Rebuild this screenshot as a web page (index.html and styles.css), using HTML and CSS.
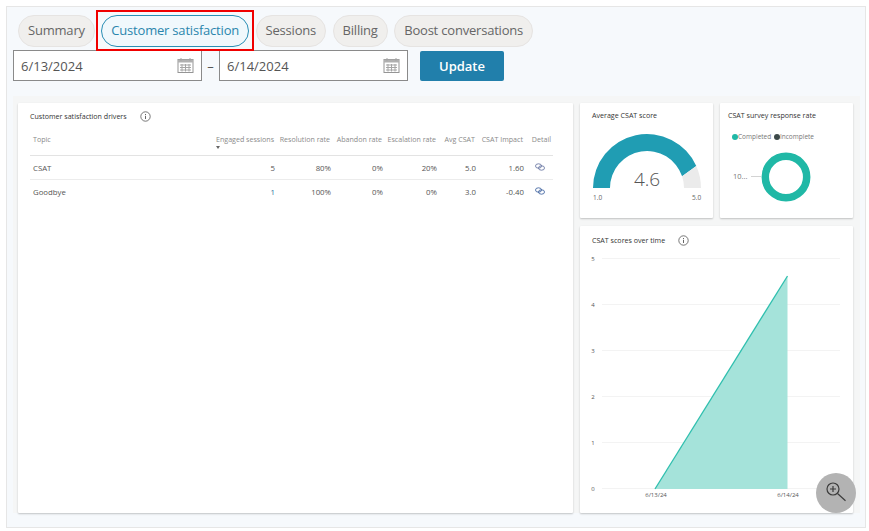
FILE: index.html
```html
<!DOCTYPE html>
<html lang="en">
<head>
    <meta charset="UTF-8">
    <meta name="viewport" content="width=device-width, initial-scale=1.0">
    <title>Customer satisfaction</title>
    <link rel="stylesheet" href="styles.css">
</head>
<body>
    <div class="frame">
        <nav class="tabs">
            <a class="tab" href="#">Summary</a>
            <span class="highlight"><a class="tab tab-active" href="#">Customer satisfaction</a></span>
            <a class="tab" href="#">Sessions</a>
            <a class="tab" href="#">Billing</a>
            <a class="tab" href="#">Boost conversations</a>
        </nav>

        <div class="filters">
            <div class="date-input">
                <span>6/13/2024</span>
                <svg class="calendar" width="17" height="17" viewBox="0 0 17 17">
                    <rect x="1" y="2.5" width="15" height="13" fill="none" stroke="#959595"/>
                    <rect x="1" y="2.5" width="15" height="3" fill="#b0b0b0"/>
                    <path d="M4 1v3M13 1v3M3 8h11M3 10.5h11M3 13h11M5 7v7.5M8.5 7v7.5M12 7v7.5" stroke="#a5a5a5" stroke-width="1" fill="none"/>
                </svg>
            </div>
            <span class="dash">–</span>
            <div class="date-input">
                <span>6/14/2024</span>
                <svg class="calendar" width="17" height="17" viewBox="0 0 17 17">
                    <rect x="1" y="2.5" width="15" height="13" fill="none" stroke="#959595"/>
                    <rect x="1" y="2.5" width="15" height="3" fill="#b0b0b0"/>
                    <path d="M4 1v3M13 1v3M3 8h11M3 10.5h11M3 13h11M5 7v7.5M8.5 7v7.5M12 7v7.5" stroke="#a5a5a5" stroke-width="1" fill="none"/>
                </svg>
            </div>
            <button class="update">Update</button>
        </div>

        <main class="dashboard">
            <section class="card card-drivers">
                <h2 class="card-title">Customer satisfaction drivers
                    <svg class="info" width="11" height="11" viewBox="0 0 11 11">
                        <circle cx="5.5" cy="5.5" r="4.7" fill="none" stroke="#555" stroke-width="0.8"/>
                        <path d="M5.5 4.8v3.2M5.5 3v1" stroke="#555" stroke-width="0.9"/>
                    </svg>
                </h2>
                <table class="drivers">
                    <tr>
                        <th class="col-topic">Topic</th>
                        <th class="col-sessions">Engaged sessions<span class="sort"></span></th>
                        <th class="col-res">Resolution rate</th>
                        <th class="col-aband">Abandon rate</th>
                        <th class="col-esc">Escalation rate</th>
                        <th class="col-avg">Avg CSAT</th>
                        <th class="col-impact">CSAT Impact</th>
                        <th class="col-detail">Detail</th>
                    </tr>
                    <tr>
                        <td>CSAT</td>
                        <td>5</td>
                        <td>80%</td>
                        <td>0%</td>
                        <td>20%</td>
                        <td>5.0</td>
                        <td>1.60</td>
                        <td class="detail">
                            <svg width="10" height="8" viewBox="0 0 10 8"><ellipse cx="3.5" cy="3" rx="3" ry="2.2" fill="none" stroke="#5a6a9a" stroke-width="0.8"/><ellipse cx="6.5" cy="5" rx="3" ry="2.2" fill="none" stroke="#5a6a9a" stroke-width="0.8"/></svg>
                        </td>
                    </tr>
                    <tr class="last">
                        <td>Goodbye</td>
                        <td class="blue">1</td>
                        <td>100%</td>
                        <td>0%</td>
                        <td>0%</td>
                        <td>3.0</td>
                        <td>-0.40</td>
                        <td class="detail">
                            <svg width="10" height="8" viewBox="0 0 10 8"><ellipse cx="3.5" cy="3" rx="3" ry="2.2" fill="none" stroke="#2f5597" stroke-width="0.8"/><ellipse cx="6.5" cy="5" rx="3" ry="2.2" fill="none" stroke="#2f5597" stroke-width="0.8"/></svg>
                        </td>
                    </tr>
                </table>
            </section>

            <section class="card">
                <h2 class="card-title">Average CSAT score</h2>
                <svg class="chart" width="133" height="90" viewBox="0 7 133 90">
                    <path d="M13 70 A54 54 0 0 1 116.3 48 L102.1 58.3 A37 37 0 0 0 30 70 Z" fill="#209db3"/>
                    <path d="M116.3 48 A54 54 0 0 1 121 70 L104 70 A37 37 0 0 0 102.1 58.3 Z" fill="#ebebeb"/>
                    <text x="67" y="68" class="gauge-value">4.6</text>
                    <text x="13" y="81.5" class="gauge-label">1.0</text>
                    <text x="112" y="81.5" class="gauge-label">5.0</text>
                </svg>
            </section>

            <section class="card card-survey">
                <h2 class="card-title">CSAT survey response rate</h2>
                <div class="legend">
                    <span class="dot dot-green"></span>Completed
                    <span class="dot dot-dark"></span>Incomplete
                </div>
                <svg class="chart-donut" width="133" height="60" viewBox="0 0 133 60">
                    <circle cx="66" cy="30" r="20.7" fill="none" stroke="#20b8a6" stroke-width="7.5"/>
                    <path d="M31 29.5h10" stroke="#c8c8c8" stroke-width="0.8"/>
                    <text x="13" y="32" class="donut-label">10...</text>
                </svg>
            </section>

            <section class="card card-trend">
                <h2 class="card-title">CSAT scores over time
                    <svg class="info" width="11" height="11" viewBox="0 0 11 11">
                        <circle cx="5.5" cy="5.5" r="4.7" fill="none" stroke="#555" stroke-width="0.8"/>
                        <path d="M5.5 4.8v3.2M5.5 3v1" stroke="#555" stroke-width="0.9"/>
                    </svg>
                </h2>
                <svg class="chart-trend" width="273" height="262" viewBox="0 0 273 262">
                    <g stroke="#f3f3f3" stroke-width="1">
                        <path d="M22 11.5h238M22 57.5h238M22 103.5h238M22 149.5h238M22 195.5h238M22 241.5h238"/>
                    </g>
                    <g class="axis">
                        <text x="13" y="14">5</text>
                        <text x="13" y="60">4</text>
                        <text x="13" y="106">3</text>
                        <text x="13" y="152">2</text>
                        <text x="13" y="198">1</text>
                        <text x="13" y="244">0</text>
                    </g>
                    <path d="M75 242 L207.5 29 V242 Z" fill="#a5e3da"/>
                    <path d="M75 242 L207.5 29" stroke="#2fbfae" stroke-width="1.3" fill="none"/>
                    <g class="axis">
                        <text x="76" y="250">6/13/24</text>
                        <text x="208" y="250">6/14/24</text>
                    </g>
                </svg>
            </section>
        </main>

        <button class="zoom-fab" aria-label="Zoom">
            <svg width="24" height="24" viewBox="0 0 24 24">
                <circle cx="9" cy="8" r="6" fill="none" stroke="#3c3c3c" stroke-width="1.2"/>
                <path d="M9 5v6M6 8h6M13.5 12.5l8 7.2" stroke="#3c3c3c" stroke-width="1.2" fill="none"/>
            </svg>
        </button>
    </div>
</body>
</html>
```

FILE: styles.css
```css
* {
    box-sizing: border-box;
}
body {
    font-family: "Open Sans", "Noto Sans", sans-serif;
    background-color: white;
    margin: 0;
    padding: 6px 3px 3px 6px;
    color: #444;
}
.frame {
    position: relative;
    width: 860px;
    height: 522px;
    border: 1px solid #e6e6e6;
    background-color: #f6f9fc;
    padding: 8px 0 0 6px;
}
.tabs {
    display: flex;
    align-items: center;
    gap: 6.5px;
    padding-left: 5px;
    height: 32px;
}
.tab {
    display: block;
    height: 32px;
    line-height: 29px;
    padding: 0 9px;
    border: 1px solid #e6e4e2;
    border-radius: 16px;
    background-color: #f0efed;
    color: #666;
    font-size: 13px;
    letter-spacing: -0.2px;
    text-decoration: none;
    white-space: nowrap;
}
.tab-active {
    border-color: #2a8fb5;
    background-color: #f0f8fc;
    color: #2a86ad;
}
.highlight {
    display: block;
    position: relative;
    margin: -5px -5px -4px;
    padding: 3px 3px 2px;
    border: 2px solid #f00000;
}
.filters {
    display: flex;
    align-items: center;
    margin-top: 3px;
    height: 31px;
}
.date-input {
    display: flex;
    align-items: center;
    justify-content: space-between;
    width: 189px;
    height: 31px;
    padding: 0 7px 0 7px;
    border: 1px solid #8a8a8a;
    background-color: white;
    font-size: 13px;
    color: #555;
}
.dash {
    width: 17px;
    text-align: center;
    font-size: 13px;
    color: #555;
}
.update {
    margin-left: 12px;
    width: 84px;
    height: 30px;
    border: none;
    border-radius: 2px;
    background-color: #217fab;
    color: white;
    font-family: inherit;
    font-size: 13px;
    font-weight: 600;
}
.dashboard {
    display: grid;
    grid-template-columns: 555px 133px 133px;
    grid-template-rows: 115px 287px;
    gap: 8px 7px;
    margin: 15px 0 0 0;
    padding: 7px 0 0 5px;
    width: 847px;
    background-color: #f5f6f6;
}
.card {
    background-color: white;
    box-shadow: 0 1px 2px rgba(0, 0, 0, 0.22);
    border-radius: 1px;
    overflow: hidden;
}
.card-drivers {
    grid-row: 1 / 3;
    padding: 0 21px 0 12px;
}
.card-trend {
    grid-column: 2 / 4;
}
.card-title {
    margin: 0;
    padding: 7px 0 0 12px;
    height: 21px;
    font-size: 7.1px;
    line-height: 10px;
    font-weight: 400;
    color: #333;
}
.card-drivers .card-title {
    padding: 8px 0 0 0;
}
.card-survey .card-title {
    padding-left: 8px;
}
.card-trend .card-title {
    padding-top: 9px;
}
.info {
    margin-left: 11px;
    vertical-align: -3px;
}
.drivers {
    width: 523px;
    margin-top: 7px;
    border-collapse: collapse;
    table-layout: fixed;
    font-size: 7.8px;
}
.drivers th {
    height: 24px;
    padding: 0 2px 8px 0;
    border-bottom: 1px solid #e3e3e3;
    text-align: right;
    font-size: 7.1px;
    font-weight: 400;
    color: #8a8a8a;
    white-space: nowrap;
    position: relative;
}
.drivers td {
    height: 24px;
    padding: 1px 1px 0 0;
    border-bottom: 1px solid #ececec;
    text-align: right;
    color: #555;
}
.drivers .last td {
    border-bottom: none;
}
.drivers td:first-child,
.drivers th:first-child {
    padding-left: 3px;
    text-align: left;
}
.drivers .blue {
    color: #1f6f9a;
}
.drivers .detail {
    padding-right: 8px;
}
.col-topic { width: 186px; }
.col-sessions { width: 60px; }
.col-res { width: 56px; }
.col-aband { width: 52px; }
.col-esc { width: 54px; }
.col-avg { width: 39px; }
.col-impact { width: 48px; }
.col-detail { width: 28px; }
.sort {
    position: absolute;
    left: 0;
    bottom: 6px;
    width: 0;
    height: 0;
    border-left: 2.5px solid transparent;
    border-right: 2.5px solid transparent;
    border-top: 3px solid #666;
}
.chart {
    display: block;
    margin-top: 1px;
}
.gauge-value {
    font-size: 19px;
    font-weight: 300;
    fill: #555;
    text-anchor: middle;
}
.gauge-label {
    font-size: 6.5px;
    fill: #666;
}
.legend {
    margin-top: 8px;
    padding-left: 12px;
    font-size: 6.5px;
    line-height: 10px;
    color: #777;
    white-space: nowrap;
}
.dot {
    display: inline-block;
    width: 6px;
    height: 6px;
    border-radius: 50%;
    vertical-align: -0.5px;
}
.dot-green {
    background-color: #20b8a6;
}
.dot-dark {
    background-color: #3d4a4a;
    margin-left: 1px;
}
.chart-donut {
    display: block;
    margin-top: 5px;
}
.donut-label {
    font-size: 7.5px;
    fill: #777;
}
.chart-trend {
    display: block;
}
.axis text {
    font-size: 6px;
    fill: #555;
    text-anchor: middle;
}
.zoom-fab {
    position: absolute;
    left: 809px;
    top: 466px;
    width: 40px;
    height: 40px;
    padding: 0;
    border: none;
    border-radius: 50%;
    background-color: #b3b3b3;
    display: flex;
    align-items: center;
    justify-content: center;
}
```
